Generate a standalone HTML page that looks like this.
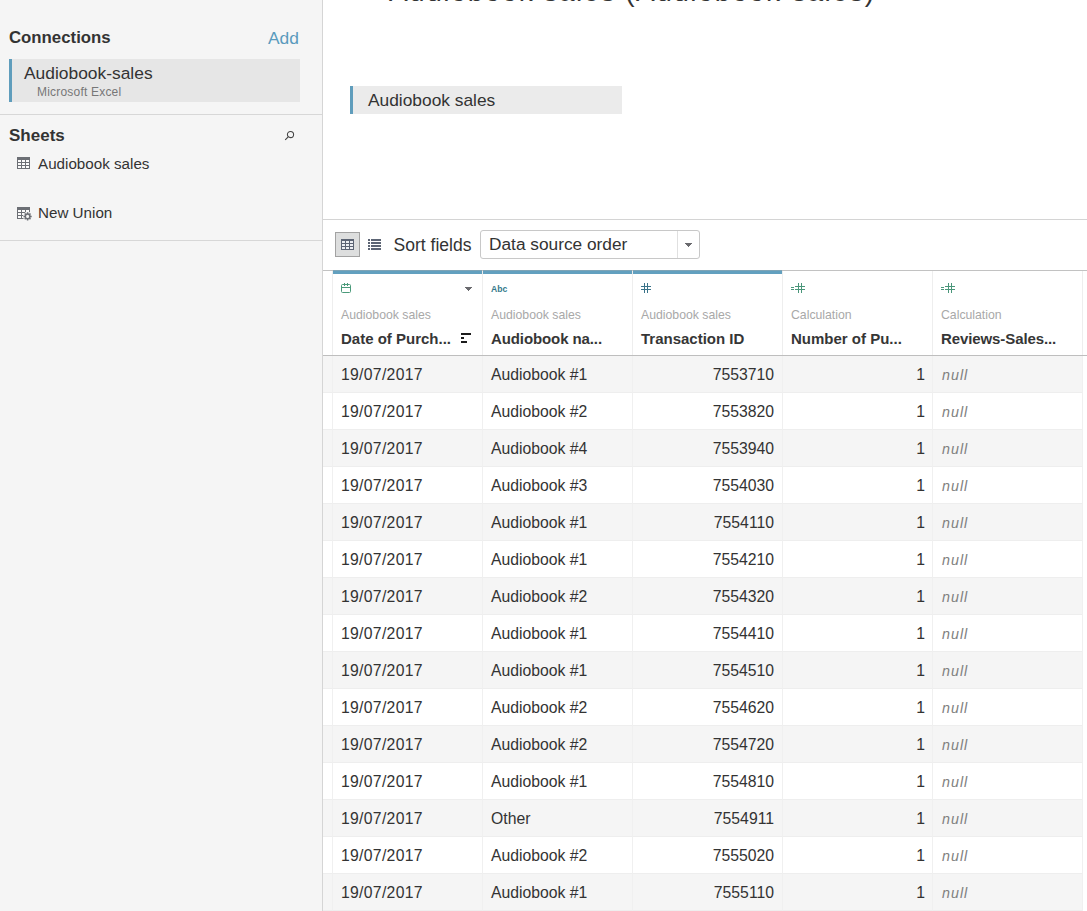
<!DOCTYPE html>
<html><head><meta charset="utf-8"><title>Audiobook sales</title>
<style>
*{box-sizing:border-box;margin:0;padding:0}
html,body{width:1087px;height:911px;overflow:hidden;background:#fff;font-family:"Liberation Sans",sans-serif;color:#333}
div,span{white-space:nowrap}
#left{position:absolute;left:0;top:0;width:323px;height:911px;background:#f5f5f5;border-right:1px solid #d5d5d5}
#left .h{position:absolute;left:9px;font-weight:bold;font-size:17px;color:#333;line-height:20px}
#add{position:absolute;left:268px;top:28px;font-size:17.4px;color:#5a9bbd;line-height:20px}
#conn{position:absolute;left:9px;top:59px;width:291px;height:43px;background:#e6e6e6;border-left:3px solid #5f9dbc}
#conn .t{position:absolute;left:12px;top:4px;font-size:17.4px;line-height:20px;color:#333}
#conn .s{position:absolute;left:25px;top:26px;font-size:12px;line-height:14px;color:#777;letter-spacing:.2px}
.sep{position:absolute;left:0;width:322px;height:1px;background:#d7d7d7}
.sheet{position:absolute;left:38px;font-size:15.2px;line-height:18px;color:#333}
.ico{position:absolute}
#main{position:absolute;left:323px;top:0;width:764px;height:911px;background:#fff}
#title{position:absolute;left:389px;top:-24px;font-size:28px;letter-spacing:1.44px;line-height:32px;color:#333}
#chip{position:absolute;left:350px;top:86px;width:272px;height:28px;background:#ebebeb;border-left:3px solid #5f9dbc}
#chip span{position:absolute;left:15px;top:4px;font-size:17.35px;line-height:20px;color:#333}
#hl{position:absolute;left:323px;top:219px;width:764px;height:1px;background:#d4d4d4}
#gridbtn{position:absolute;left:335px;top:232px;width:25px;height:25px;background:#dddede;border:1px solid #a2a2a2}
#sortl{position:absolute;left:393.5px;top:234px;font-size:17.55px;line-height:22px;color:#333}
#dd{position:absolute;left:480px;top:230px;width:220px;height:29px;border:1px solid #c8c8c8;border-radius:3px;background:#fff}
#dd span{position:absolute;left:8px;top:2px;font-size:17.3px;line-height:22px;color:#333}
#dd i{position:absolute;left:196px;top:0;width:1px;height:27px;background:#e0e0e0}
#tbl{position:absolute;left:323px;top:270px;width:764px;height:641px;overflow:hidden}
#hdr{position:relative;height:86px;border-top:1px solid #c2c2c2;border-bottom:1px solid #bebebe;font-size:0}
#hdr .g{display:inline-block;width:9px;height:84px;vertical-align:top}
.hc{display:inline-block;position:relative;width:150px;height:84px;border-left:1px solid #eeeeee;vertical-align:top}
.hc.sel:before{content:"";position:absolute;left:0;top:-1px;width:149px;height:4px;background:linear-gradient(#7ea4b6 1px,#62a0bf 1px)}
.hc .src{position:absolute;left:8px;top:37px;font-size:12.25px;line-height:14px;color:#a8a8a8}
.hc .nm{position:absolute;left:8px;top:59px;font-size:15px;line-height:18px;font-weight:bold;color:#363636}
.hc svg,.hc .abc,.hc .arr{position:absolute}
.r{height:37px;font-size:0}
.r.odd{background:#f5f5f5}
.r .g{display:inline-block;width:9px;height:37px;vertical-align:top;border-bottom:1px solid #eee}
.r .c{display:inline-block;width:150px;height:37px;border-bottom:1px solid #eee;border-left:1px solid #f0f0f0;vertical-align:top;font-size:15.75px;line-height:37px;padding:0 8px;color:#333}
.r .c.dt{letter-spacing:.3px}
.r .c.num{text-align:right;padding-right:8px}
.r .c.one{padding-right:7px}
.r .c.nul{font-style:italic;color:#808080;font-size:14.3px;letter-spacing:1px;padding-left:9px;line-height:39px}
.r .c.last{width:10px;padding:0;background:#fff;border-bottom:0}
</style></head><body>
<div id="left">
  <div class="h" style="top:28px;font-size:16.8px">Connections</div>
  <div id="add">Add</div>
  <div id="conn"><div class="t">Audiobook-sales</div><div class="s">Microsoft Excel</div></div>
  <div class="sep" style="top:114px"></div>
  <div class="h" style="top:126px">Sheets</div>
  <svg class="ico" style="left:284px;top:129px" width="12" height="12" viewBox="0 0 12 12"><circle cx="6.5" cy="5.5" r="3.1" fill="none" stroke="#444" stroke-width="1.05"/><path d="M4.2 7.8 L1.2 10.9" stroke="#444" stroke-width="1.1"/></svg>
  <svg class="ico" style="left:17px;top:157px" width="13" height="12" viewBox="0 0 13 12" shape-rendering="crispEdges"><rect x="0" y="0" width="13" height="12" fill="#6c6f75"/><rect x="1" y="3" width="3" height="2" fill="#fbfbfb"/><rect x="5" y="3" width="3" height="2" fill="#fbfbfb"/><rect x="9" y="3" width="3" height="2" fill="#fbfbfb"/><rect x="1" y="6" width="3" height="2" fill="#fbfbfb"/><rect x="5" y="6" width="3" height="2" fill="#fbfbfb"/><rect x="9" y="6" width="3" height="2" fill="#fbfbfb"/><rect x="1" y="9" width="3" height="2" fill="#fbfbfb"/><rect x="5" y="9" width="3" height="2" fill="#fbfbfb"/><rect x="9" y="9" width="3" height="2" fill="#fbfbfb"/></svg>
  <div class="sheet" style="top:155px">Audiobook sales</div>
  <svg class="ico" style="left:17px;top:207px" width="16" height="15" viewBox="0 0 16 15" shape-rendering="crispEdges"><rect x="0" y="0" width="13" height="12" fill="#6c6f75"/><rect x="1" y="3" width="3" height="2" fill="#fbfbfb"/><rect x="5" y="3" width="3" height="2" fill="#fbfbfb"/><rect x="9" y="3" width="3" height="2" fill="#fbfbfb"/><rect x="1" y="6" width="3" height="2" fill="#fbfbfb"/><rect x="5" y="6" width="3" height="2" fill="#fbfbfb"/><rect x="9" y="6" width="3" height="2" fill="#fbfbfb"/><rect x="1" y="9" width="3" height="2" fill="#fbfbfb"/><rect x="5" y="9" width="3" height="2" fill="#fbfbfb"/><rect x="9" y="9" width="3" height="2" fill="#fbfbfb"/><g shape-rendering="geometricPrecision"><circle cx="10.6" cy="9.4" r="4.6" fill="#f5f5f5"/><path d="M10.6 5.3V13.5M6.5 9.4H14.7M7.7 6.5L13.5 12.3M13.5 6.5L7.7 12.3" stroke="#6c6f75" stroke-width="1.5"/><circle cx="10.6" cy="9.4" r="2.3" fill="#f5f5f5" stroke="#6c6f75" stroke-width="1.5"/></g></svg>
  <div class="sheet" style="top:204px">New Union</div>
  <div class="sep" style="top:240px"></div>
</div>
<div id="main"></div>
<div id="title">Audiobook sales (Audiobook-sales)</div>
<div id="chip"><span>Audiobook sales</span></div>
<div id="hl"></div>
<div id="gridbtn"><svg style="position:absolute;left:5px;top:6px" width="13" height="11" viewBox="0 0 13 11" shape-rendering="crispEdges"><rect x="0" y="0" width="13" height="11" fill="#5c6474"/><rect x="1" y="2" width="3" height="2" fill="#eceef2"/><rect x="5" y="2" width="3" height="2" fill="#eceef2"/><rect x="9" y="2" width="3" height="2" fill="#eceef2"/><rect x="1" y="5" width="3" height="2" fill="#eceef2"/><rect x="5" y="5" width="3" height="2" fill="#eceef2"/><rect x="9" y="5" width="3" height="2" fill="#eceef2"/><rect x="1" y="8" width="3" height="2" fill="#eceef2"/><rect x="5" y="8" width="3" height="2" fill="#eceef2"/><rect x="9" y="8" width="3" height="2" fill="#eceef2"/></svg></div>
<svg class="ico" style="left:368px;top:239px" width="13" height="11" viewBox="0 0 13 11" shape-rendering="crispEdges"><rect x="0" y="0" width="2" height="2" fill="#5c6474"/><rect x="3" y="0" width="10" height="2" fill="#5c6474"/><rect x="0" y="3" width="2" height="2" fill="#5c6474"/><rect x="3" y="3" width="10" height="2" fill="#5c6474"/><rect x="0" y="6" width="2" height="2" fill="#5c6474"/><rect x="3" y="6" width="10" height="2" fill="#5c6474"/><rect x="0" y="9" width="2" height="2" fill="#5c6474"/><rect x="3" y="9" width="10" height="2" fill="#5c6474"/></svg>
<div id="sortl">Sort fields</div>
<div id="dd"><span>Data source order</span><i></i><svg style="position:absolute;left:204px;top:12px" width="7" height="4" viewBox="0 0 7 4" shape-rendering="crispEdges"><path d="M0 0H7V1H6V2H5V3H4V4H3V3H2V2H1V1H0Z" fill="#6a6a6e"/></svg></div>
<div id="tbl">
 <div id="hdr"><span class="g"></span><div class="hc sel">
   <svg style="left:8px;top:12px" width="10" height="10" viewBox="0 0 10 10"><rect x=".5" y="1.5" width="9" height="8" rx="1" fill="none" stroke="#4a9a7a" stroke-width="1"/><path d="M.5 4.5H9.5M3.5 0V3M6.5 0V3" stroke="#4a9a7a" stroke-width="1"/></svg>
   <svg style="left:132px;top:16px" width="7" height="4" viewBox="0 0 7 4" shape-rendering="crispEdges"><path d="M0 0H7V1H6V2H5V3H4V4H3V3H2V2H1V1H0Z" fill="#6a6a6e"/></svg>
   <div class="src">Audiobook sales</div><div class="nm">Date of Purch...</div>
   <svg style="left:128px;top:62px" width="10" height="10" viewBox="0 0 10 10" shape-rendering="crispEdges"><path d="M0 0H10V2H0ZM0 4H3V6H0ZM0 8H6V10H0Z" fill="#1c1c1c"/></svg>
 </div><div class="hc sel">
   <div class="abc" style="left:8px;top:12px;font-size:8.6px;font-weight:bold;color:#35798c;line-height:12px">Abc</div>
   <div class="src">Audiobook sales</div><div class="nm" style="letter-spacing:-.1px">Audiobook na...</div>
 </div><div class="hc sel">
   <svg style="left:8px;top:12px" width="10" height="10" viewBox="0 0 10 10"><path d="M3.5 0V10M6.5 0V10M0 3.5H10M0 6.5H10" stroke="#3a7389" stroke-width="1"/></svg>
   <div class="src">Audiobook sales</div><div class="nm">Transaction ID</div>
 </div><div class="hc">
   <svg style="left:8px;top:12px" width="14" height="10" viewBox="0 0 14 10"><path d="M7.5 0V10M10.5 0V10M4 3.5H14M4 6.5H14M0 4.5H3M0 6.5H3" stroke="#4a967a" stroke-width="1"/></svg>
   <div class="src">Calculation</div><div class="nm">Number of Pu...</div>
 </div><div class="hc">
   <svg style="left:8px;top:12px" width="14" height="10" viewBox="0 0 14 10"><path d="M7.5 0V10M10.5 0V10M4 3.5H14M4 6.5H14M0 4.5H3M0 6.5H3" stroke="#4a967a" stroke-width="1"/></svg>
   <div class="src">Calculation</div><div class="nm" style="letter-spacing:-.1px">Reviews-Sales...</div>
 </div><div class="hc" style="width:10px"></div></div>
<div class="r odd"><span class="g"></span><span class="c dt">19/07/2017</span><span class="c">Audiobook #1</span><span class="c num">7553710</span><span class="c num one">1</span><span class="c nul">null</span><span class="c last"></span></div>
<div class="r"><span class="g"></span><span class="c dt">19/07/2017</span><span class="c">Audiobook #2</span><span class="c num">7553820</span><span class="c num one">1</span><span class="c nul">null</span><span class="c last"></span></div>
<div class="r odd"><span class="g"></span><span class="c dt">19/07/2017</span><span class="c">Audiobook #4</span><span class="c num">7553940</span><span class="c num one">1</span><span class="c nul">null</span><span class="c last"></span></div>
<div class="r"><span class="g"></span><span class="c dt">19/07/2017</span><span class="c">Audiobook #3</span><span class="c num">7554030</span><span class="c num one">1</span><span class="c nul">null</span><span class="c last"></span></div>
<div class="r odd"><span class="g"></span><span class="c dt">19/07/2017</span><span class="c">Audiobook #1</span><span class="c num">7554110</span><span class="c num one">1</span><span class="c nul">null</span><span class="c last"></span></div>
<div class="r"><span class="g"></span><span class="c dt">19/07/2017</span><span class="c">Audiobook #1</span><span class="c num">7554210</span><span class="c num one">1</span><span class="c nul">null</span><span class="c last"></span></div>
<div class="r odd"><span class="g"></span><span class="c dt">19/07/2017</span><span class="c">Audiobook #2</span><span class="c num">7554320</span><span class="c num one">1</span><span class="c nul">null</span><span class="c last"></span></div>
<div class="r"><span class="g"></span><span class="c dt">19/07/2017</span><span class="c">Audiobook #1</span><span class="c num">7554410</span><span class="c num one">1</span><span class="c nul">null</span><span class="c last"></span></div>
<div class="r odd"><span class="g"></span><span class="c dt">19/07/2017</span><span class="c">Audiobook #1</span><span class="c num">7554510</span><span class="c num one">1</span><span class="c nul">null</span><span class="c last"></span></div>
<div class="r"><span class="g"></span><span class="c dt">19/07/2017</span><span class="c">Audiobook #2</span><span class="c num">7554620</span><span class="c num one">1</span><span class="c nul">null</span><span class="c last"></span></div>
<div class="r odd"><span class="g"></span><span class="c dt">19/07/2017</span><span class="c">Audiobook #2</span><span class="c num">7554720</span><span class="c num one">1</span><span class="c nul">null</span><span class="c last"></span></div>
<div class="r"><span class="g"></span><span class="c dt">19/07/2017</span><span class="c">Audiobook #1</span><span class="c num">7554810</span><span class="c num one">1</span><span class="c nul">null</span><span class="c last"></span></div>
<div class="r odd"><span class="g"></span><span class="c dt">19/07/2017</span><span class="c">Other</span><span class="c num">7554911</span><span class="c num one">1</span><span class="c nul">null</span><span class="c last"></span></div>
<div class="r"><span class="g"></span><span class="c dt">19/07/2017</span><span class="c">Audiobook #2</span><span class="c num">7555020</span><span class="c num one">1</span><span class="c nul">null</span><span class="c last"></span></div>
<div class="r odd"><span class="g"></span><span class="c dt">19/07/2017</span><span class="c">Audiobook #1</span><span class="c num">7555110</span><span class="c num one">1</span><span class="c nul">null</span><span class="c last"></span></div>

</div>
</body></html>
